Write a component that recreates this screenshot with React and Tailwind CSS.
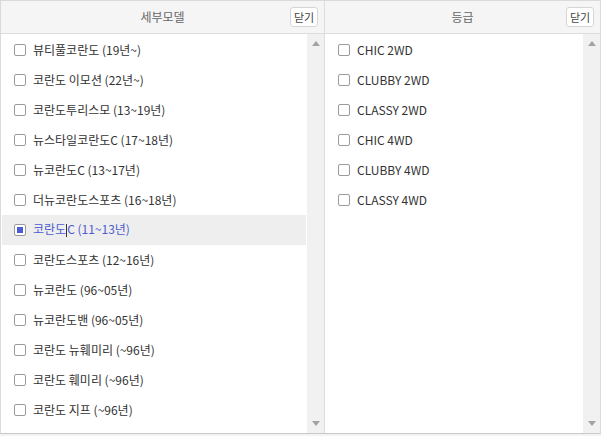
import React from 'react';

const models = [
  '뷰티풀코란도 (19년~)',
  '코란도 이모션 (22년~)',
  '코란도투리스모 (13~19년)',
  '뉴스타일코란도C (17~18년)',
  '뉴코란도C (13~17년)',
  '더뉴코란도스포츠 (16~18년)',
  '코란도C (11~13년)',
  '코란도스포츠 (12~16년)',
  '뉴코란도 (96~05년)',
  '뉴코란도밴 (96~05년)',
  '코란도 뉴훼미리 (~96년)',
  '코란도 훼미리 (~96년)',
  '코란도 지프 (~96년)',
];

const grades = ['CHIC 2WD', 'CLUBBY 2WD', 'CLASSY 2WD', 'CHIC 4WD', 'CLUBBY 4WD', 'CLASSY 4WD'];

const Scrollbar = () => (
  <div className="w-[17px] shrink-0 bg-[#f1f1f1] flex flex-col justify-between items-center py-[7px]">
    <svg width="8" height="5" viewBox="0 0 8 5"><path d="M0 5 L4 0 L8 5 Z" fill="#a3a3a3" /></svg>
    <svg width="8" height="5" viewBox="0 0 8 5"><path d="M0 0 L4 5 L8 0 Z" fill="#a3a3a3" /></svg>
  </div>
);

const Row = ({ label, checked }) => (
  <div className={`h-[30px] flex items-center pl-[12px] ${checked ? 'bg-[#eeeeee]' : ''}`}>
    <span className="w-[12px] h-[12px] border border-[#9a9a9a] rounded-[2px] bg-white flex items-center justify-center shrink-0">
      {checked && <span className="w-[6px] h-[6px] bg-[#4b5bd6]"></span>}
    </span>
    <span className={`ml-[7px] text-[12px] leading-none ${checked ? 'text-[#4d5bd0]' : 'text-[#333]'}`}>
      {checked ? (
        <>
          코란도<span className="inline-block w-px h-[13px] bg-[#333] align-middle -mt-[2px]"></span>C (11~13년)
        </>
      ) : (
        label
      )}
    </span>
  </div>
);

const Panel = ({ title, items, selected, className }) => (
  <div className={`flex flex-col h-full ${className}`}>
    <div className="relative h-[33px] shrink-0 bg-[#f5f5f5] border-b border-[#dddddd] flex items-center justify-center">
      <span className="text-[12px] text-[#666]">{title}</span>
      <button className="absolute right-[6px] top-[6px] w-[28px] h-[20px] bg-white border border-[#d6d6d6] rounded-[3px] text-[11px] text-[#444] leading-none">
        닫기
      </button>
    </div>
    <div className="flex flex-1 min-h-0">
      <div className="flex-1 pt-[1px] px-[1px] overflow-hidden">
        {items.map((it, i) => (
          <Row key={it} label={it} checked={i === selected} />
        ))}
      </div>
      <Scrollbar />
    </div>
  </div>
);

export default function App() {
  return (
    <div className="w-[601px] h-[436px] bg-[#f3f3f3] font-['Noto_Sans_CJK_KR','Noto_Sans',sans-serif]">
      <div className="flex h-[434px] border border-[#dadada] border-b-[#c8c8c8] bg-white">
        <Panel title="세부모델" items={models} selected={6} className="w-[324px] border-r border-[#dddddd]" />
        <Panel title="등급" items={grades} selected={-1} className="flex-1" />
      </div>
    </div>
  );
}
